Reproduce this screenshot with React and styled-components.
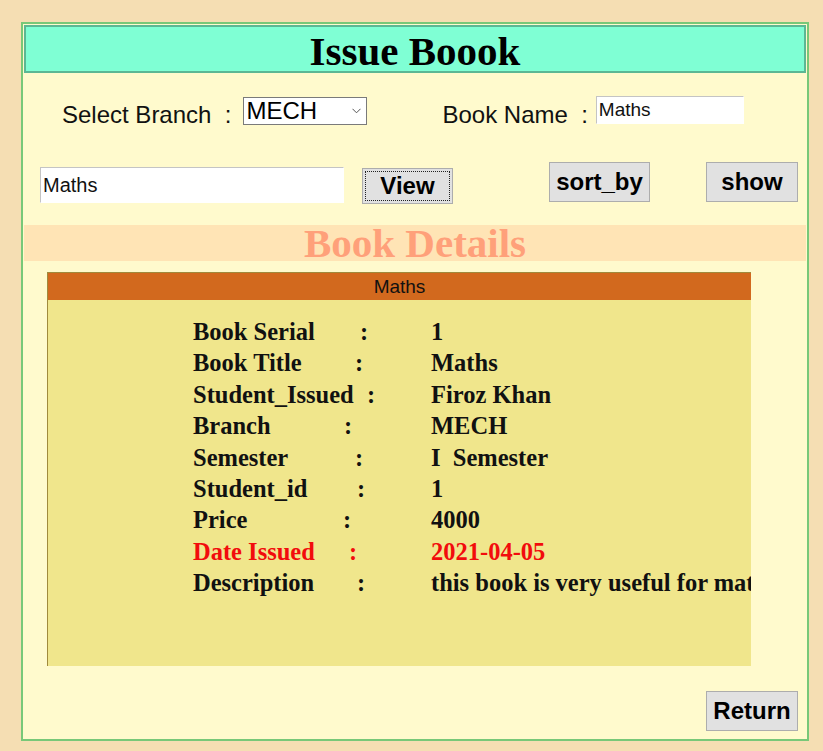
import React from "react";
import styled, { createGlobalStyle } from "styled-components";

const Global = createGlobalStyle`
  html, body {
    margin: 0;
    padding: 0;
    background: #f5deb3;
  }
  body {
    min-height: 751px;
    font-family: "Liberation Sans", Arial, sans-serif;
  }
  #root { padding-top: 22px; }
`;

const Frame = styled.div`
  margin-left: 21px;
  width: 788px;
  box-sizing: border-box;
  border: 2px solid #78c878;
  padding: 1px;
  background: #fffacd;
  display: flex;
  flex-direction: column;
`;

const Header = styled.h1`
  margin: 0;
  height: 48px;
  box-sizing: border-box;
  border: 2px solid #5cb794;
  background: #7fffd4;
  padding-top: 3px;
  text-align: center;
  font-family: "Liberation Serif", "Times New Roman", serif;
  font-weight: bold;
  font-size: 41px;
  line-height: 42px;
  color: #000;
`;

const Row = styled.div`
  display: flex;
  align-items: flex-start;
  height: ${(p) => p.$h}px;
  margin-top: ${(p) => p.$mt}px;
  padding-left: ${(p) => p.$pl}px;
`;

const FieldLabel = styled.span`
  margin-left: ${(p) => p.$ml || 0}px;
  margin-top: 5px;
  font-size: 24px;
  line-height: 28px;
  color: #111;
  white-space: pre;
`;

const SelectWrap = styled.div`
  position: relative;
  margin-left: 12px;
  margin-top: 1px;
  width: 124px;
  height: 28px;
`;

const Select = styled.select`
  appearance: none;
  -webkit-appearance: none;
  width: 100%;
  height: 100%;
  box-sizing: border-box;
  border: 1px solid #7a7a7a;
  border-radius: 0;
  background: #fff;
  padding: 0 0 0 2px;
  font-family: "Liberation Sans", Arial, sans-serif;
  font-size: 24px;
  line-height: 26px;
  color: #000;
  outline: none;
`;

const Chevron = styled.svg`
  position: absolute;
  right: 6px;
  top: 11px;
  width: 9px;
  height: 6px;
  pointer-events: none;
`;

const TextInput = styled.input`
  box-sizing: border-box;
  width: ${(p) => p.$w}px;
  height: ${(p) => p.$h}px;
  margin-left: ${(p) => p.$ml || 0}px;
  margin-top: ${(p) => p.$mt || 0}px;
  border: 1px solid #fff;
  border-top-color: #c4c4c4;
  border-left-color: #c4c4c4;
  border-radius: 0;
  background: #fff;
  padding: 0 0 0 2px;
  font-family: "Liberation Sans", Arial, sans-serif;
  font-size: ${(p) => p.$fs}px;
  color: #111;
  outline: none;
`;

const Button = styled.button`
  box-sizing: border-box;
  width: ${(p) => p.$w}px;
  height: ${(p) => p.$h}px;
  margin-left: ${(p) => p.$ml || 0}px;
  margin-top: ${(p) => p.$mt || 0}px;
  padding: 0;
  border: 1px solid #adadad;
  border-radius: 0;
  background: #e1e1e1;
  font-family: "Liberation Sans", Arial, sans-serif;
  font-weight: bold;
  font-size: 24px;
  color: #000;
  text-align: center;
  outline: ${(p) => (p.$focused ? "1px dotted #222" : "none")};
  outline-offset: -4px;
  cursor: pointer;
`;

const Band = styled.h2`
  margin: 21px 0 0;
  height: 36px;
  background: #ffe4b5;
  text-align: center;
  font-family: "Liberation Serif", "Times New Roman", serif;
  font-weight: bold;
  font-size: 41px;
  line-height: 37px;
  color: #ffa07a;
`;

const Card = styled.section`
  margin: 11px 0 0 23px;
  width: 704px;
  border-top: 1px solid #a08a3c;
  border-left: 1px solid #a08a3c;
  box-sizing: border-box;
`;

const CardTitle = styled.div`
  height: 27px;
  background: #d2691e;
  text-align: center;
  font-size: 19px;
  line-height: 28px;
  color: #111;
`;

const CardBody = styled.div`
  height: 366px;
  box-sizing: border-box;
  background: #f0e68c;
  padding: 16px 0 0 145px;
  overflow: hidden;
`;

const DetailRow = styled.div`
  display: flex;
  white-space: pre;
  font-family: "Liberation Serif", "Times New Roman", serif;
  font-weight: bold;
  font-size: 24.5px;
  line-height: 31.4px;
  color: ${(p) => (p.$alert ? "#f20c0c" : "#111")};
`;

const Key = styled.span`
  flex: none;
  width: ${(p) => p.$w}px;
`;

const Sep = styled.span`
  flex: none;
  width: ${(p) => 238 - p.$after}px;
`;

const Value = styled.span`
  flex: none;
`;

const Footer = styled.div`
  display: flex;
  justify-content: flex-end;
  padding-right: 8px;
  margin-top: 25px;
  margin-bottom: 7px;
`;

const details = [
  { k: "Book Serial", c: 167, v: "1" },
  { k: "Book Title", c: 162, v: "Maths" },
  { k: "Student_Issued", c: 174, v: "Firoz Khan" },
  { k: "Branch", c: 151, v: "MECH" },
  { k: "Semester", c: 162, v: "I  Semester" },
  { k: "Student_id", c: 164, v: "1" },
  { k: "Price", c: 150, v: "4000" },
  { k: "Date Issued", c: 156, v: "2021-04-05", alert: true },
  { k: "Description", c: 164, v: "this book is very useful for maths students" },
];

export default function App() {
  return (
    <>
      <Global />
      <Frame>
        <Header>Issue Boook</Header>

        <Row $h={29} $mt={23} $pl={38}>
          <FieldLabel>{"Select Branch  :"}</FieldLabel>
          <SelectWrap>
            <Select defaultValue="MECH">
              <option>MECH</option>
              <option>CSE</option>
              <option>ECE</option>
            </Select>
            <Chevron viewBox="0 0 9 6">
              <path d="M0.5 0.8 L4.5 4.8 L8.5 0.8" fill="none" stroke="#555" strokeWidth="1" />
            </Chevron>
          </SelectWrap>
          <FieldLabel $ml={75}>{"Book Name  :"}</FieldLabel>
          <TextInput $w={148} $h={28} $ml={8} $fs={19} defaultValue="Maths" />
        </Row>

        <Row $h={42} $mt={37} $pl={16}>
          <TextInput $w={304} $h={36} $mt={5} $fs={20} defaultValue="Maths" />
          <Button $w={91} $h={36} $ml={18} $mt={6} $focused>View</Button>
          <Button $w={101} $h={40} $ml={96}>sort_by</Button>
          <Button $w={92} $h={40} $ml={56}>show</Button>
        </Row>

        <Band>Book Details</Band>

        <Card>
          <CardTitle>Maths</CardTitle>
          <CardBody>
            {details.map((d) => (
              <DetailRow key={d.k} $alert={d.alert}>
                <Key $w={d.c}>{d.k}</Key>
                <Sep $after={d.c}>:</Sep>
                <Value>{d.v}</Value>
              </DetailRow>
            ))}
          </CardBody>
        </Card>

        <Footer>
          <Button $w={92} $h={40}>Return</Button>
        </Footer>
      </Frame>
    </>
  );
}
